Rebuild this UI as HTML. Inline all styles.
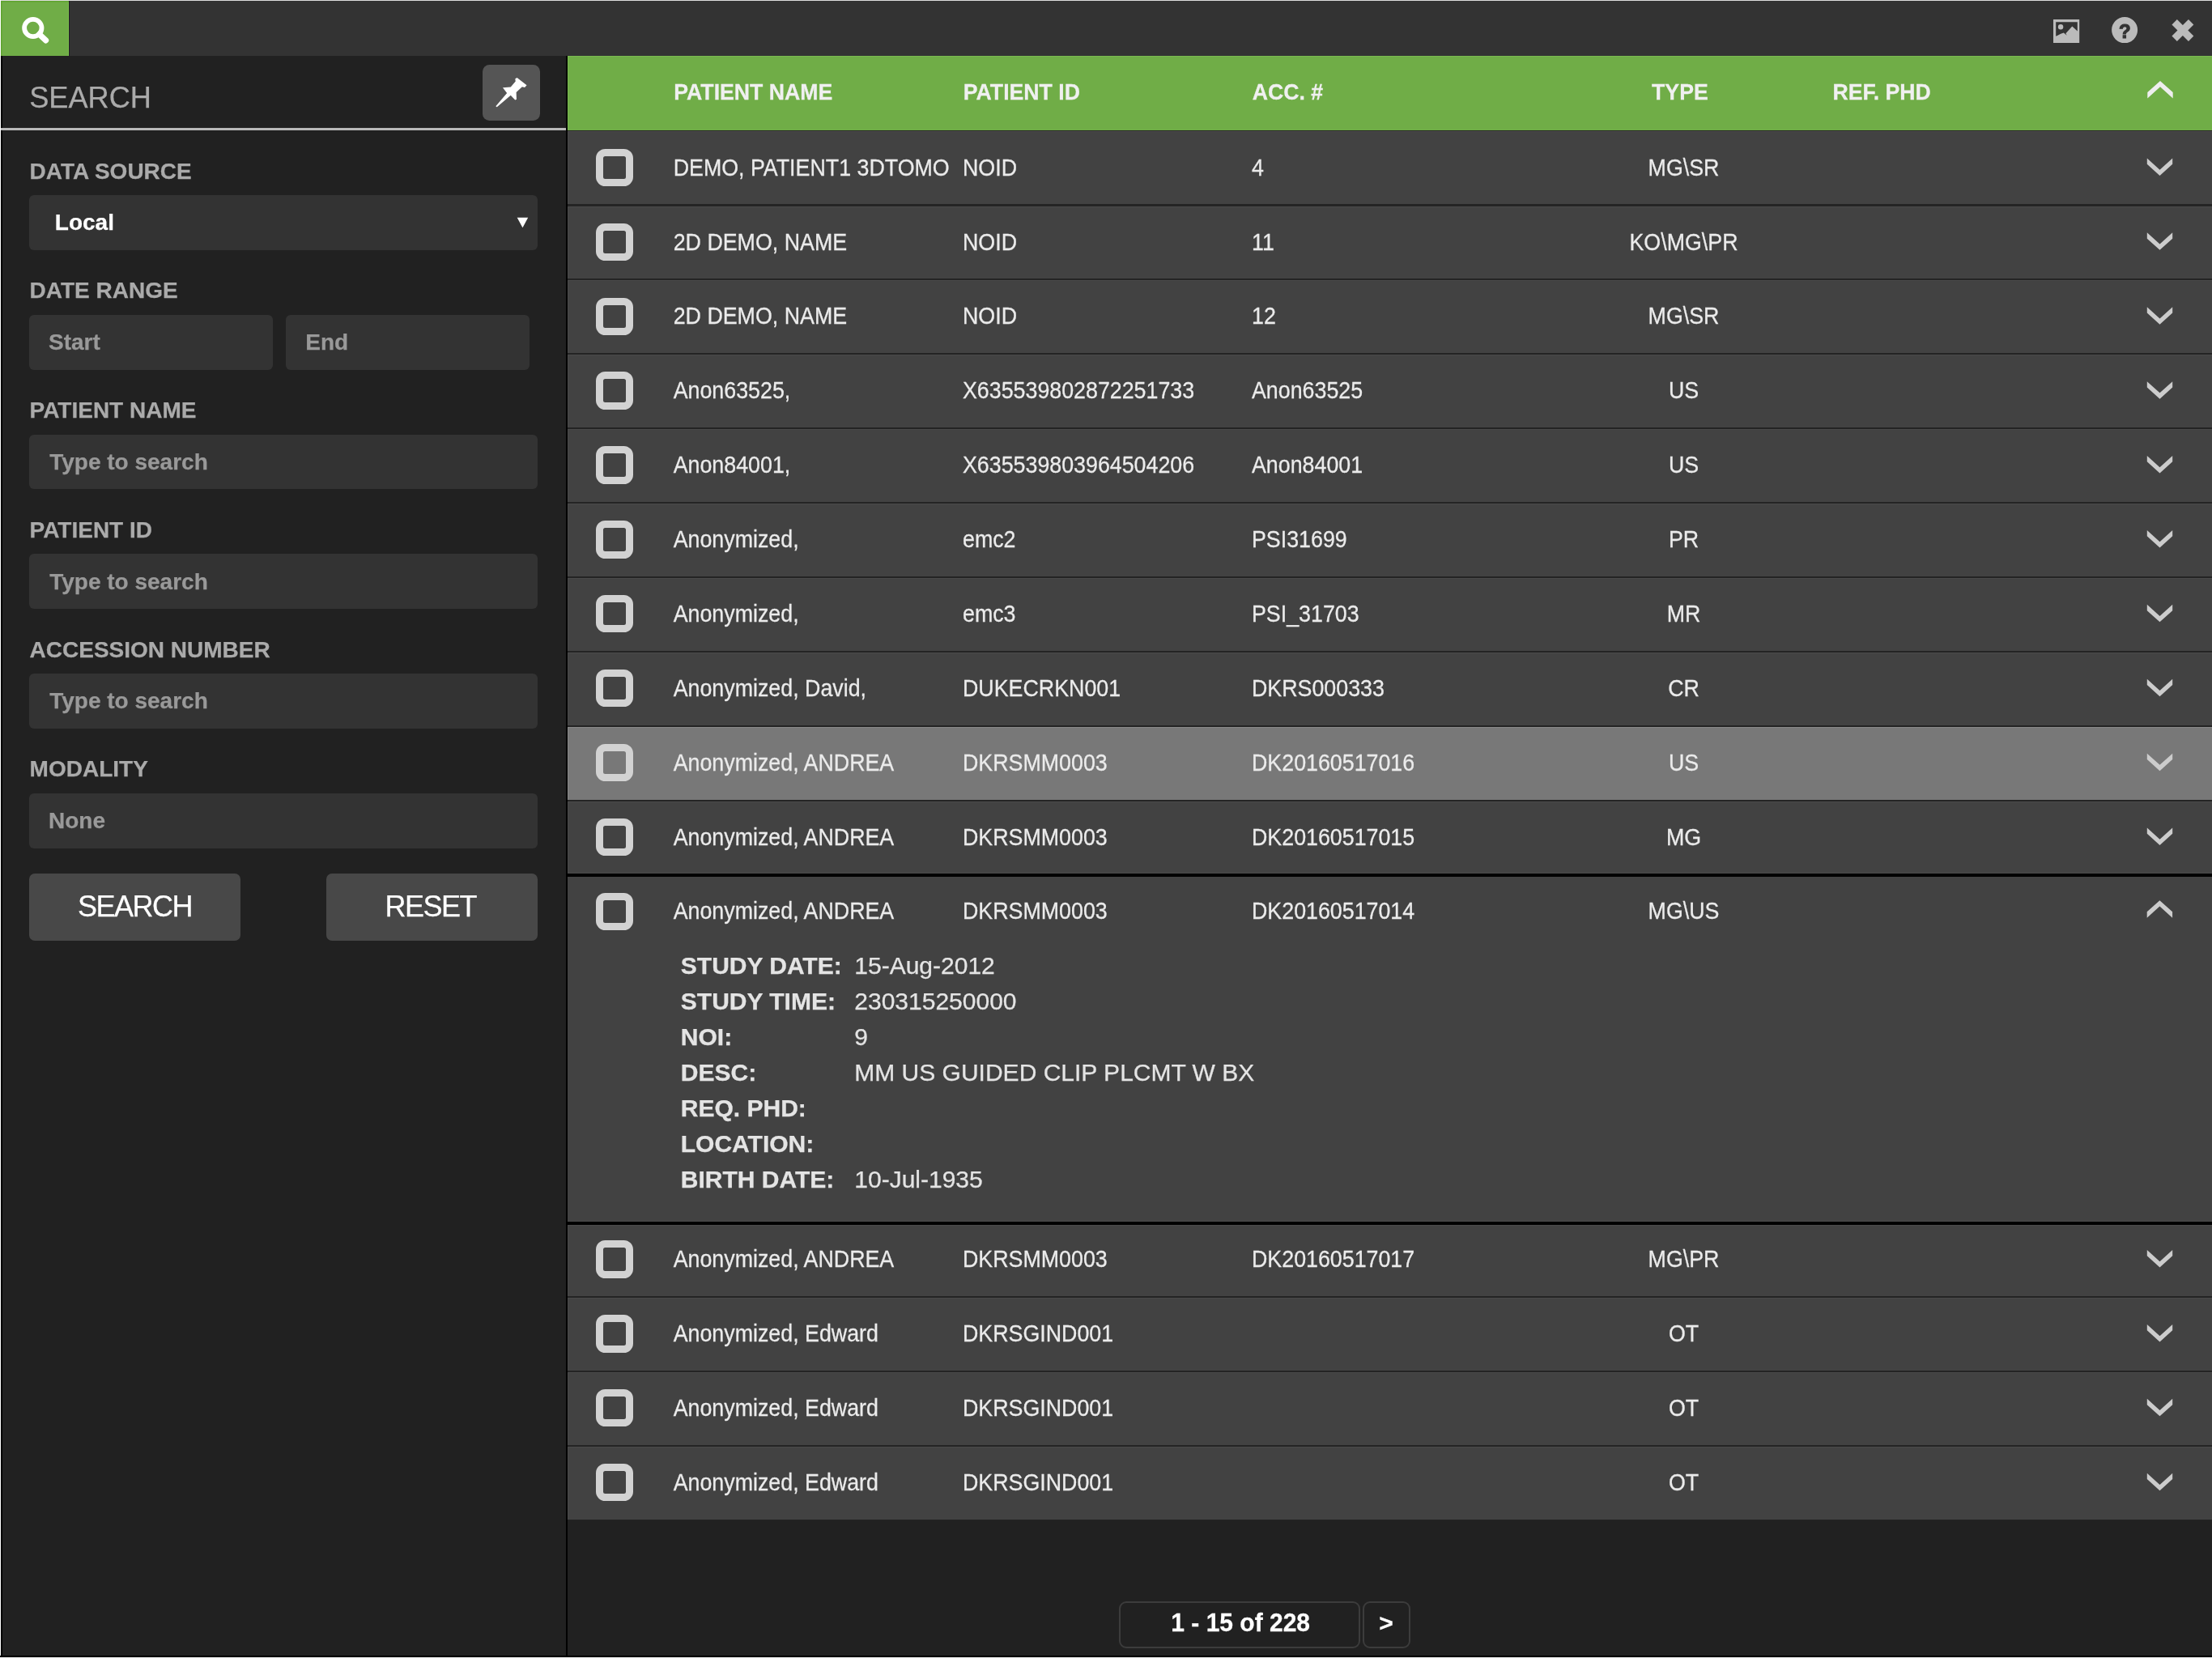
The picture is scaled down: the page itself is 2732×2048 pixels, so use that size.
<!DOCTYPE html>
<html lang="en"><head><meta charset="utf-8"><title>Search</title>
<style>
html,body{margin:0;padding:0;}
body{width:2732px;height:2048px;overflow:hidden;background:#212121;position:relative;font-family:"Liberation Sans", sans-serif;}
.t{position:absolute;white-space:nowrap;line-height:1;-webkit-text-stroke:0.25px currentColor;filter:blur(0.45px);}
.b{position:absolute;}
svg{position:absolute;overflow:visible;}
</style></head><body>
<header class="topbar">
<div class="b" style="left:0.00px;top:0.00px;width:2732.00px;height:69.00px;background:#333;"></div>
<div class="b" style="left:1.00px;top:1.00px;width:84.00px;height:68.00px;background:#70ad47;box-shadow:inset 1.5px 1.5px 0 #5ea42f, inset -1px 0 0 #7cc04e;"></div>
<div class="b" style="left:85.00px;top:1.00px;width:1.30px;height:68.00px;background:#201c24;"></div>
<svg style="left:0;top:0" width="90" height="70"><circle cx="40.8" cy="34.5" r="10.7" fill="none" stroke="#fff" stroke-width="5.8"/><line x1="48.6" y1="42.4" x2="56.6" y2="49.9" stroke="#fff" stroke-width="7.2" stroke-linecap="round"/></svg>
<svg style="left:0;top:0" width="2732" height="70"><rect x="2536" y="24" width="32.2" height="29" fill="#bbb"/><path d="M2539.2 27.2 H2565.8 V38.5 L2559.3 32.6 L2551.4 41.2 L2552.8 43.8 L2548.8 40.6 L2545.2 41.8 L2539.2 44.8 Z" fill="#333"/><circle cx="2545.1" cy="33.3" r="3.2" fill="#bbb"/><circle cx="2624.1" cy="37.1" r="16" fill="#bbb"/><g transform="translate(2695.9 37.5) rotate(45)" fill="#bbb"><rect x="-14.5" y="-4.5" width="29" height="9"/><rect x="-4.5" y="-14.5" width="9" height="29"/></g></svg>
<span class="t" style="left:2624.30px;top:27.28px;font-size:24px;font-weight:700;color:#333;transform:translateX(-50%);-webkit-text-stroke:1.1px #333;">?</span>
</header>
<aside class="search-panel">
<div class="b" style="left:1.00px;top:69.00px;width:2.00px;height:1979.00px;background:#000;"></div>
<div class="b" style="left:699.00px;top:69.00px;width:2.00px;height:1979.00px;background:#000;"></div>
<span class="t" style="left:36.20px;top:102.76px;font-size:36.2px;color:#aaa;">SEARCH</span>
<div class="b" style="left:596.00px;top:80.00px;width:71.00px;height:69.00px;background:#555;border-radius:8.5px;"></div>
<svg style="left:0;top:0" width="700" height="160"><path d="M612.29 131.22 L626.13 114.94 L620.98 108.26 L630.75 107.45 L636.72 100.39 L636.34 97.14 L638.62 95.94 L650.56 105.28 L648.11 108.10 L644.86 107.34 L637.64 114.07 L637.96 122.75 L636.23 123.62 L630.75 117.76 L613.76 132.20 Z" fill="#fff"/></svg>
<div class="b" style="left:1.00px;top:158.20px;width:698.00px;height:2.80px;background:#b9b9b9;"></div>
<span class="t" style="left:36.60px;top:197.60px;font-size:28px;font-weight:700;color:#aaa;">DATA SOURCE</span>
<span class="t" style="left:36.60px;top:345.35px;font-size:28px;font-weight:700;color:#aaa;">DATE RANGE</span>
<span class="t" style="left:36.60px;top:493.10px;font-size:28px;font-weight:700;color:#aaa;">PATIENT NAME</span>
<span class="t" style="left:36.60px;top:640.85px;font-size:28px;font-weight:700;color:#aaa;">PATIENT ID</span>
<span class="t" style="left:36.60px;top:788.60px;font-size:28px;font-weight:700;color:#aaa;">ACCESSION NUMBER</span>
<span class="t" style="left:36.60px;top:936.35px;font-size:28px;font-weight:700;color:#aaa;">MODALITY</span>
<div class="b" style="left:36.00px;top:241.00px;width:628.00px;height:67.90px;background:#333;border-radius:6px;"></div>
<span class="t" style="left:67.80px;top:261.25px;font-size:28px;font-weight:700;color:#fff;">Local</span>
<svg style="left:0;top:0" width="700" height="320"><path d="M638.7 268.7 H652.2 L645.45 281.3 Z" fill="#fff"/></svg>
<div class="b" style="left:36.00px;top:388.75px;width:301.00px;height:67.90px;background:#333;border-radius:6px;"></div>
<span class="t" style="left:60.00px;top:409.00px;font-size:28px;font-weight:700;color:#999;">Start</span>
<div class="b" style="left:353.30px;top:388.75px;width:301.20px;height:67.90px;background:#333;border-radius:6px;"></div>
<span class="t" style="left:377.30px;top:409.00px;font-size:28px;font-weight:700;color:#999;">End</span>
<div class="b" style="left:36.00px;top:536.50px;width:628.00px;height:67.90px;background:#333;border-radius:6px;"></div>
<span class="t" style="left:61.20px;top:556.75px;font-size:28px;font-weight:700;color:#999;">Type to search</span>
<div class="b" style="left:36.00px;top:684.25px;width:628.00px;height:67.90px;background:#333;border-radius:6px;"></div>
<span class="t" style="left:61.20px;top:704.50px;font-size:28px;font-weight:700;color:#999;">Type to search</span>
<div class="b" style="left:36.00px;top:832.00px;width:628.00px;height:67.90px;background:#333;border-radius:6px;"></div>
<span class="t" style="left:61.20px;top:852.25px;font-size:28px;font-weight:700;color:#999;">Type to search</span>
<div class="b" style="left:36.00px;top:979.75px;width:628.00px;height:67.90px;background:#333;border-radius:6px;"></div>
<span class="t" style="left:60.00px;top:1000.00px;font-size:28px;font-weight:700;color:#999;">None</span>
<div class="b" style="left:36.00px;top:1079.00px;width:261.20px;height:82.80px;background:#484848;border-radius:7px;"></div>
<div class="b" style="left:402.60px;top:1079.00px;width:261.20px;height:82.80px;background:#484848;border-radius:7px;"></div>
<span class="t" style="left:166.60px;top:1101.53px;font-size:36px;color:#fff;transform:translateX(-50%);letter-spacing:-1.5px;">SEARCH</span>
<span class="t" style="left:531.80px;top:1101.53px;font-size:36px;color:#fff;transform:translateX(-50%);letter-spacing:-1.5px;">RESET</span>
</aside>
<main class="results">
<div class="b" style="left:701.00px;top:69.00px;width:2031.00px;height:92.20px;background:#70ad47;box-shadow:inset 1px 1px 0 #7aba50;"></div>
<div class="b" style="left:701.00px;top:161.20px;width:2031.00px;height:1716.40px;background:#242424;"></div>
<span class="t" style="left:832.30px;top:101.02px;font-size:26.67px;font-weight:700;color:#f0f0f0;transform:scaleY(1.07);transform-origin:0 84.65%;">PATIENT NAME</span>
<span class="t" style="left:1189.80px;top:101.02px;font-size:26.67px;font-weight:700;color:#f0f0f0;transform:scaleY(1.07);transform-origin:0 84.65%;">PATIENT ID</span>
<span class="t" style="left:1546.80px;top:101.02px;font-size:26.67px;font-weight:700;color:#f0f0f0;transform:scaleY(1.07);transform-origin:0 84.65%;">ACC. #</span>
<span class="t" style="left:2074.90px;top:101.02px;font-size:26.67px;font-weight:700;color:#f0f0f0;transform:translateX(-50%) scaleY(1.07);transform-origin:50% 84.65%;">TYPE</span>
<span class="t" style="left:2263.40px;top:101.02px;font-size:26.67px;font-weight:700;color:#f0f0f0;transform:scaleY(1.07);transform-origin:0 84.65%;">REF. PHD</span>
<div class="b" style="left:701.00px;top:162.30px;width:2031.00px;height:90.20px;background:#424242;box-shadow:inset 1px 1px 0 #4a4a4a;"></div>
<div class="cells">
<div class="b" style="left:735.7px;top:183.70px;width:28.4px;height:28.4px;border:9.3px solid #d2d2d2;border-radius:11.5px;"></div>
<span class="t" style="left:831.70px;top:194.61px;font-size:26.8px;color:#ebebeb;transform:scaleY(1.07);transform-origin:0 84.65%;">DEMO, PATIENT1 3DTOMO</span>
<span class="t" style="left:1189.00px;top:194.61px;font-size:26.8px;color:#ebebeb;transform:scaleY(1.07);transform-origin:0 84.65%;">NOID</span>
<span class="t" style="left:1546.00px;top:194.61px;font-size:26.8px;color:#ebebeb;transform:scaleY(1.07);transform-origin:0 84.65%;">4</span>
<span class="t" style="left:2079.50px;top:194.61px;font-size:26.8px;color:#ebebeb;transform:translateX(-50%) scaleY(1.07);transform-origin:50% 84.65%;">MG\SR</span>
</div>
<div class="b" style="left:701.00px;top:254.50px;width:2031.00px;height:89.90px;background:#424242;box-shadow:inset 1px 1px 0 #4a4a4a;"></div>
<div class="cells">
<div class="b" style="left:735.7px;top:275.60px;width:28.4px;height:28.4px;border:9.3px solid #d2d2d2;border-radius:11.5px;"></div>
<span class="t" style="left:831.70px;top:286.51px;font-size:26.8px;color:#ebebeb;transform:scaleY(1.07);transform-origin:0 84.65%;">2D DEMO, NAME</span>
<span class="t" style="left:1189.00px;top:286.51px;font-size:26.8px;color:#ebebeb;transform:scaleY(1.07);transform-origin:0 84.65%;">NOID</span>
<span class="t" style="left:1546.00px;top:286.51px;font-size:26.8px;color:#ebebeb;transform:scaleY(1.07);transform-origin:0 84.65%;">11</span>
<span class="t" style="left:2079.50px;top:286.51px;font-size:26.8px;color:#ebebeb;transform:translateX(-50%) scaleY(1.07);transform-origin:50% 84.65%;">KO\MG\PR</span>
</div>
<div class="b" style="left:701.00px;top:346.40px;width:2031.00px;height:89.90px;background:#424242;box-shadow:inset 1px 1px 0 #4a4a4a;"></div>
<div class="cells">
<div class="b" style="left:735.7px;top:367.50px;width:28.4px;height:28.4px;border:9.3px solid #d2d2d2;border-radius:11.5px;"></div>
<span class="t" style="left:831.70px;top:378.41px;font-size:26.8px;color:#ebebeb;transform:scaleY(1.07);transform-origin:0 84.65%;">2D DEMO, NAME</span>
<span class="t" style="left:1189.00px;top:378.41px;font-size:26.8px;color:#ebebeb;transform:scaleY(1.07);transform-origin:0 84.65%;">NOID</span>
<span class="t" style="left:1546.00px;top:378.41px;font-size:26.8px;color:#ebebeb;transform:scaleY(1.07);transform-origin:0 84.65%;">12</span>
<span class="t" style="left:2079.50px;top:378.41px;font-size:26.8px;color:#ebebeb;transform:translateX(-50%) scaleY(1.07);transform-origin:50% 84.65%;">MG\SR</span>
</div>
<div class="b" style="left:701.00px;top:438.30px;width:2031.00px;height:89.90px;background:#424242;box-shadow:inset 1px 1px 0 #4a4a4a;"></div>
<div class="cells">
<div class="b" style="left:735.7px;top:459.40px;width:28.4px;height:28.4px;border:9.3px solid #d2d2d2;border-radius:11.5px;"></div>
<span class="t" style="left:831.70px;top:470.31px;font-size:26.8px;color:#ebebeb;transform:scaleY(1.07);transform-origin:0 84.65%;">Anon63525,</span>
<span class="t" style="left:1189.00px;top:470.31px;font-size:26.8px;color:#ebebeb;transform:scaleY(1.07);transform-origin:0 84.65%;">X635539802872251733</span>
<span class="t" style="left:1546.00px;top:470.31px;font-size:26.8px;color:#ebebeb;transform:scaleY(1.07);transform-origin:0 84.65%;">Anon63525</span>
<span class="t" style="left:2079.50px;top:470.31px;font-size:26.8px;color:#ebebeb;transform:translateX(-50%) scaleY(1.07);transform-origin:50% 84.65%;">US</span>
</div>
<div class="b" style="left:701.00px;top:530.20px;width:2031.00px;height:89.90px;background:#424242;box-shadow:inset 1px 1px 0 #4a4a4a;"></div>
<div class="cells">
<div class="b" style="left:735.7px;top:551.30px;width:28.4px;height:28.4px;border:9.3px solid #d2d2d2;border-radius:11.5px;"></div>
<span class="t" style="left:831.70px;top:562.21px;font-size:26.8px;color:#ebebeb;transform:scaleY(1.07);transform-origin:0 84.65%;">Anon84001,</span>
<span class="t" style="left:1189.00px;top:562.21px;font-size:26.8px;color:#ebebeb;transform:scaleY(1.07);transform-origin:0 84.65%;">X635539803964504206</span>
<span class="t" style="left:1546.00px;top:562.21px;font-size:26.8px;color:#ebebeb;transform:scaleY(1.07);transform-origin:0 84.65%;">Anon84001</span>
<span class="t" style="left:2079.50px;top:562.21px;font-size:26.8px;color:#ebebeb;transform:translateX(-50%) scaleY(1.07);transform-origin:50% 84.65%;">US</span>
</div>
<div class="b" style="left:701.00px;top:622.10px;width:2031.00px;height:89.90px;background:#424242;box-shadow:inset 1px 1px 0 #4a4a4a;"></div>
<div class="cells">
<div class="b" style="left:735.7px;top:643.20px;width:28.4px;height:28.4px;border:9.3px solid #d2d2d2;border-radius:11.5px;"></div>
<span class="t" style="left:831.70px;top:654.11px;font-size:26.8px;color:#ebebeb;transform:scaleY(1.07);transform-origin:0 84.65%;">Anonymized,</span>
<span class="t" style="left:1189.00px;top:654.11px;font-size:26.8px;color:#ebebeb;transform:scaleY(1.07);transform-origin:0 84.65%;">emc2</span>
<span class="t" style="left:1546.00px;top:654.11px;font-size:26.8px;color:#ebebeb;transform:scaleY(1.07);transform-origin:0 84.65%;">PSI31699</span>
<span class="t" style="left:2079.50px;top:654.11px;font-size:26.8px;color:#ebebeb;transform:translateX(-50%) scaleY(1.07);transform-origin:50% 84.65%;">PR</span>
</div>
<div class="b" style="left:701.00px;top:714.00px;width:2031.00px;height:89.90px;background:#424242;box-shadow:inset 1px 1px 0 #4a4a4a;"></div>
<div class="cells">
<div class="b" style="left:735.7px;top:735.10px;width:28.4px;height:28.4px;border:9.3px solid #d2d2d2;border-radius:11.5px;"></div>
<span class="t" style="left:831.70px;top:746.01px;font-size:26.8px;color:#ebebeb;transform:scaleY(1.07);transform-origin:0 84.65%;">Anonymized,</span>
<span class="t" style="left:1189.00px;top:746.01px;font-size:26.8px;color:#ebebeb;transform:scaleY(1.07);transform-origin:0 84.65%;">emc3</span>
<span class="t" style="left:1546.00px;top:746.01px;font-size:26.8px;color:#ebebeb;transform:scaleY(1.07);transform-origin:0 84.65%;">PSI_31703</span>
<span class="t" style="left:2079.50px;top:746.01px;font-size:26.8px;color:#ebebeb;transform:translateX(-50%) scaleY(1.07);transform-origin:50% 84.65%;">MR</span>
</div>
<div class="b" style="left:701.00px;top:805.90px;width:2031.00px;height:89.90px;background:#424242;box-shadow:inset 1px 1px 0 #4a4a4a;"></div>
<div class="cells">
<div class="b" style="left:735.7px;top:827.00px;width:28.4px;height:28.4px;border:9.3px solid #d2d2d2;border-radius:11.5px;"></div>
<span class="t" style="left:831.70px;top:837.91px;font-size:26.8px;color:#ebebeb;transform:scaleY(1.07);transform-origin:0 84.65%;">Anonymized, David,</span>
<span class="t" style="left:1189.00px;top:837.91px;font-size:26.8px;color:#ebebeb;transform:scaleY(1.07);transform-origin:0 84.65%;">DUKECRKN001</span>
<span class="t" style="left:1546.00px;top:837.91px;font-size:26.8px;color:#ebebeb;transform:scaleY(1.07);transform-origin:0 84.65%;">DKRS000333</span>
<span class="t" style="left:2079.50px;top:837.91px;font-size:26.8px;color:#ebebeb;transform:translateX(-50%) scaleY(1.07);transform-origin:50% 84.65%;">CR</span>
</div>
<div class="b" style="left:701.00px;top:897.80px;width:2031.00px;height:89.90px;background:#787878;box-shadow:inset 1px 1px 0 #888;"></div>
<div class="cells">
<div class="b" style="left:735.7px;top:918.90px;width:28.4px;height:28.4px;border:9.3px solid #d2d2d2;border-radius:11.5px;"></div>
<span class="t" style="left:831.70px;top:929.81px;font-size:26.8px;color:#ebebeb;transform:scaleY(1.07);transform-origin:0 84.65%;">Anonymized, ANDREA</span>
<span class="t" style="left:1189.00px;top:929.81px;font-size:26.8px;color:#ebebeb;transform:scaleY(1.07);transform-origin:0 84.65%;">DKRSMM0003</span>
<span class="t" style="left:1546.00px;top:929.81px;font-size:26.8px;color:#ebebeb;transform:scaleY(1.07);transform-origin:0 84.65%;">DK20160517016</span>
<span class="t" style="left:2079.50px;top:929.81px;font-size:26.8px;color:#ebebeb;transform:translateX(-50%) scaleY(1.07);transform-origin:50% 84.65%;">US</span>
</div>
<div class="b" style="left:701.00px;top:989.70px;width:2031.00px;height:89.90px;background:#424242;box-shadow:inset 1px 1px 0 #4a4a4a;"></div>
<div class="cells">
<div class="b" style="left:735.7px;top:1010.80px;width:28.4px;height:28.4px;border:9.3px solid #d2d2d2;border-radius:11.5px;"></div>
<span class="t" style="left:831.70px;top:1021.71px;font-size:26.8px;color:#ebebeb;transform:scaleY(1.07);transform-origin:0 84.65%;">Anonymized, ANDREA</span>
<span class="t" style="left:1189.00px;top:1021.71px;font-size:26.8px;color:#ebebeb;transform:scaleY(1.07);transform-origin:0 84.65%;">DKRSMM0003</span>
<span class="t" style="left:1546.00px;top:1021.71px;font-size:26.8px;color:#ebebeb;transform:scaleY(1.07);transform-origin:0 84.65%;">DK20160517015</span>
<span class="t" style="left:2079.50px;top:1021.71px;font-size:26.8px;color:#ebebeb;transform:translateX(-50%) scaleY(1.07);transform-origin:50% 84.65%;">MG</span>
</div>
<div class="b" style="left:701.00px;top:1078.00px;width:2031.00px;height:1.00px;background:#4b4b4b;"></div>
<div class="b" style="left:701.00px;top:1079.00px;width:2031.00px;height:434.00px;background:#000;"></div>
<div class="b" style="left:701.00px;top:1083.00px;width:2031.00px;height:426.00px;background:#424242;box-shadow:inset 0 -1px 0 #4b4b4b;"></div>
<div class="cells">
<div class="b" style="left:735.7px;top:1102.50px;width:28.4px;height:28.4px;border:9.3px solid #d2d2d2;border-radius:11.5px;"></div>
<span class="t" style="left:831.70px;top:1113.41px;font-size:26.8px;color:#ebebeb;transform:scaleY(1.07);transform-origin:0 84.65%;">Anonymized, ANDREA</span>
<span class="t" style="left:1189.00px;top:1113.41px;font-size:26.8px;color:#ebebeb;transform:scaleY(1.07);transform-origin:0 84.65%;">DKRSMM0003</span>
<span class="t" style="left:1546.00px;top:1113.41px;font-size:26.8px;color:#ebebeb;transform:scaleY(1.07);transform-origin:0 84.65%;">DK20160517014</span>
<span class="t" style="left:2079.50px;top:1113.41px;font-size:26.8px;color:#ebebeb;transform:translateX(-50%) scaleY(1.07);transform-origin:50% 84.65%;">MG\US</span>
</div>
<span class="t" style="left:840.80px;top:1178.11px;font-size:30px;font-weight:700;color:#e4e4e4;">STUDY DATE:</span>
<span class="t" style="left:1055.30px;top:1178.11px;font-size:30px;color:#e4e4e4;">15-Aug-2012</span>
<span class="t" style="left:840.80px;top:1222.04px;font-size:30px;font-weight:700;color:#e4e4e4;">STUDY TIME:</span>
<span class="t" style="left:1055.30px;top:1222.04px;font-size:30px;color:#e4e4e4;">230315250000</span>
<span class="t" style="left:840.80px;top:1265.96px;font-size:30px;font-weight:700;color:#e4e4e4;">NOI:</span>
<span class="t" style="left:1055.30px;top:1265.96px;font-size:30px;color:#e4e4e4;">9</span>
<span class="t" style="left:840.80px;top:1309.89px;font-size:30px;font-weight:700;color:#e4e4e4;">DESC:</span>
<span class="t" style="left:1055.30px;top:1309.89px;font-size:30px;color:#e4e4e4;">MM US GUIDED CLIP PLCMT W BX</span>
<span class="t" style="left:840.80px;top:1353.83px;font-size:30px;font-weight:700;color:#e4e4e4;">REQ. PHD:</span>
<span class="t" style="left:840.80px;top:1397.76px;font-size:30px;font-weight:700;color:#e4e4e4;">LOCATION:</span>
<span class="t" style="left:840.80px;top:1441.68px;font-size:30px;font-weight:700;color:#e4e4e4;">BIRTH DATE:</span>
<span class="t" style="left:1055.30px;top:1441.68px;font-size:30px;color:#e4e4e4;">10-Jul-1935</span>
<div class="b" style="left:701.00px;top:1513.00px;width:2031.00px;height:87.90px;background:#424242;box-shadow:inset 1px 1px 0 #4a4a4a;"></div>
<div class="cells">
<div class="b" style="left:735.7px;top:1532.30px;width:28.4px;height:28.4px;border:9.3px solid #d2d2d2;border-radius:11.5px;"></div>
<span class="t" style="left:831.70px;top:1543.21px;font-size:26.8px;color:#ebebeb;transform:scaleY(1.07);transform-origin:0 84.65%;">Anonymized, ANDREA</span>
<span class="t" style="left:1189.00px;top:1543.21px;font-size:26.8px;color:#ebebeb;transform:scaleY(1.07);transform-origin:0 84.65%;">DKRSMM0003</span>
<span class="t" style="left:1546.00px;top:1543.21px;font-size:26.8px;color:#ebebeb;transform:scaleY(1.07);transform-origin:0 84.65%;">DK20160517017</span>
<span class="t" style="left:2079.50px;top:1543.21px;font-size:26.8px;color:#ebebeb;transform:translateX(-50%) scaleY(1.07);transform-origin:50% 84.65%;">MG\PR</span>
</div>
<div class="b" style="left:701.00px;top:1602.90px;width:2031.00px;height:89.90px;background:#424242;box-shadow:inset 1px 1px 0 #4a4a4a;"></div>
<div class="cells">
<div class="b" style="left:735.7px;top:1624.20px;width:28.4px;height:28.4px;border:9.3px solid #d2d2d2;border-radius:11.5px;"></div>
<span class="t" style="left:831.70px;top:1635.11px;font-size:26.8px;color:#ebebeb;transform:scaleY(1.07);transform-origin:0 84.65%;">Anonymized, Edward</span>
<span class="t" style="left:1189.00px;top:1635.11px;font-size:26.8px;color:#ebebeb;transform:scaleY(1.07);transform-origin:0 84.65%;">DKRSGIND001</span>
<span class="t" style="left:2079.50px;top:1635.11px;font-size:26.8px;color:#ebebeb;transform:translateX(-50%) scaleY(1.07);transform-origin:50% 84.65%;">OT</span>
</div>
<div class="b" style="left:701.00px;top:1694.80px;width:2031.00px;height:89.90px;background:#424242;box-shadow:inset 1px 1px 0 #4a4a4a;"></div>
<div class="cells">
<div class="b" style="left:735.7px;top:1716.10px;width:28.4px;height:28.4px;border:9.3px solid #d2d2d2;border-radius:11.5px;"></div>
<span class="t" style="left:831.70px;top:1727.01px;font-size:26.8px;color:#ebebeb;transform:scaleY(1.07);transform-origin:0 84.65%;">Anonymized, Edward</span>
<span class="t" style="left:1189.00px;top:1727.01px;font-size:26.8px;color:#ebebeb;transform:scaleY(1.07);transform-origin:0 84.65%;">DKRSGIND001</span>
<span class="t" style="left:2079.50px;top:1727.01px;font-size:26.8px;color:#ebebeb;transform:translateX(-50%) scaleY(1.07);transform-origin:50% 84.65%;">OT</span>
</div>
<div class="b" style="left:701.00px;top:1786.70px;width:2031.00px;height:89.90px;background:#424242;box-shadow:inset 1px 1px 0 #4a4a4a;"></div>
<div class="cells">
<div class="b" style="left:735.7px;top:1808.00px;width:28.4px;height:28.4px;border:9.3px solid #d2d2d2;border-radius:11.5px;"></div>
<span class="t" style="left:831.70px;top:1818.91px;font-size:26.8px;color:#ebebeb;transform:scaleY(1.07);transform-origin:0 84.65%;">Anonymized, Edward</span>
<span class="t" style="left:1189.00px;top:1818.91px;font-size:26.8px;color:#ebebeb;transform:scaleY(1.07);transform-origin:0 84.65%;">DKRSGIND001</span>
<span class="t" style="left:2079.50px;top:1818.91px;font-size:26.8px;color:#ebebeb;transform:translateX(-50%) scaleY(1.07);transform-origin:50% 84.65%;">OT</span>
</div>
<svg style="left:0;top:0" width="2732" height="2048"><path d="M2668 99.90 L2683.70 114.10 V121.40 L2668 107.20 L2652.30 121.40 V114.10 Z" fill="#eee"/><path d="M2667.5 216.95 L2683.20 202.75 V195.45 L2667.5 209.65 L2651.80 195.45 V202.75 Z" fill="#ccc"/><path d="M2667.5 308.85 L2683.20 294.65 V287.35 L2667.5 301.55 L2651.80 287.35 V294.65 Z" fill="#ccc"/><path d="M2667.5 400.75 L2683.20 386.55 V379.25 L2667.5 393.45 L2651.80 379.25 V386.55 Z" fill="#ccc"/><path d="M2667.5 492.65 L2683.20 478.45 V471.15 L2667.5 485.35 L2651.80 471.15 V478.45 Z" fill="#ccc"/><path d="M2667.5 584.55 L2683.20 570.35 V563.05 L2667.5 577.25 L2651.80 563.05 V570.35 Z" fill="#ccc"/><path d="M2667.5 676.45 L2683.20 662.25 V654.95 L2667.5 669.15 L2651.80 654.95 V662.25 Z" fill="#ccc"/><path d="M2667.5 768.35 L2683.20 754.15 V746.85 L2667.5 761.05 L2651.80 746.85 V754.15 Z" fill="#ccc"/><path d="M2667.5 860.25 L2683.20 846.05 V838.75 L2667.5 852.95 L2651.80 838.75 V846.05 Z" fill="#ccc"/><path d="M2667.5 952.15 L2683.20 937.95 V930.65 L2667.5 944.85 L2651.80 930.65 V937.95 Z" fill="#ccc"/><path d="M2667.5 1044.05 L2683.20 1029.85 V1022.55 L2667.5 1036.75 L2651.80 1022.55 V1029.85 Z" fill="#ccc"/><path d="M2667.4 1112.15 L2683.10 1126.35 V1133.65 L2667.4 1119.45 L2651.70 1133.65 V1126.35 Z" fill="#ccc"/><path d="M2667.5 1565.55 L2683.20 1551.35 V1544.05 L2667.5 1558.25 L2651.80 1544.05 V1551.35 Z" fill="#ccc"/><path d="M2667.5 1657.45 L2683.20 1643.25 V1635.95 L2667.5 1650.15 L2651.80 1635.95 V1643.25 Z" fill="#ccc"/><path d="M2667.5 1749.35 L2683.20 1735.15 V1727.85 L2667.5 1742.05 L2651.80 1727.85 V1735.15 Z" fill="#ccc"/><path d="M2667.5 1841.25 L2683.20 1827.05 V1819.75 L2667.5 1833.95 L2651.80 1819.75 V1827.05 Z" fill="#ccc"/></svg>
<div class="b" style="left:701.00px;top:1877.60px;width:2031.00px;height:170.40px;background:#212121;"></div>
</main>
<nav class="pager">
<div class="b" style="left:1382.3px;top:1977.5px;width:293.7px;height:54.5px;border:2px solid #3c3c3c;border-radius:9px;"></div>
<div class="b" style="left:1683px;top:1977.5px;width:55px;height:54.5px;border:2px solid #3c3c3c;border-radius:9px;"></div>
<span class="t" style="left:1532.20px;top:1990.20px;font-size:30px;font-weight:700;color:#fff;transform:translateX(-50%) scaleY(1.02);transform-origin:50% 84.65%;">1 - 15 of 228</span>
<span class="t" style="left:1712.00px;top:1990.20px;font-size:30px;font-weight:700;color:#fff;transform:translateX(-50%);">&gt;</span>
</nav>
<div class="b" style="left:0.00px;top:0.00px;width:2732.00px;height:1.00px;background:#ddd;"></div>
<div class="b" style="left:0.00px;top:0.00px;width:1.00px;height:2048.00px;background:#fff;"></div>
<div class="b" style="left:0.00px;top:2045.00px;width:2732.00px;height:2.00px;background:#000;"></div>
<div class="b" style="left:0.00px;top:2047.00px;width:2732.00px;height:1.00px;background:#e6e6e6;"></div>
</body></html>
